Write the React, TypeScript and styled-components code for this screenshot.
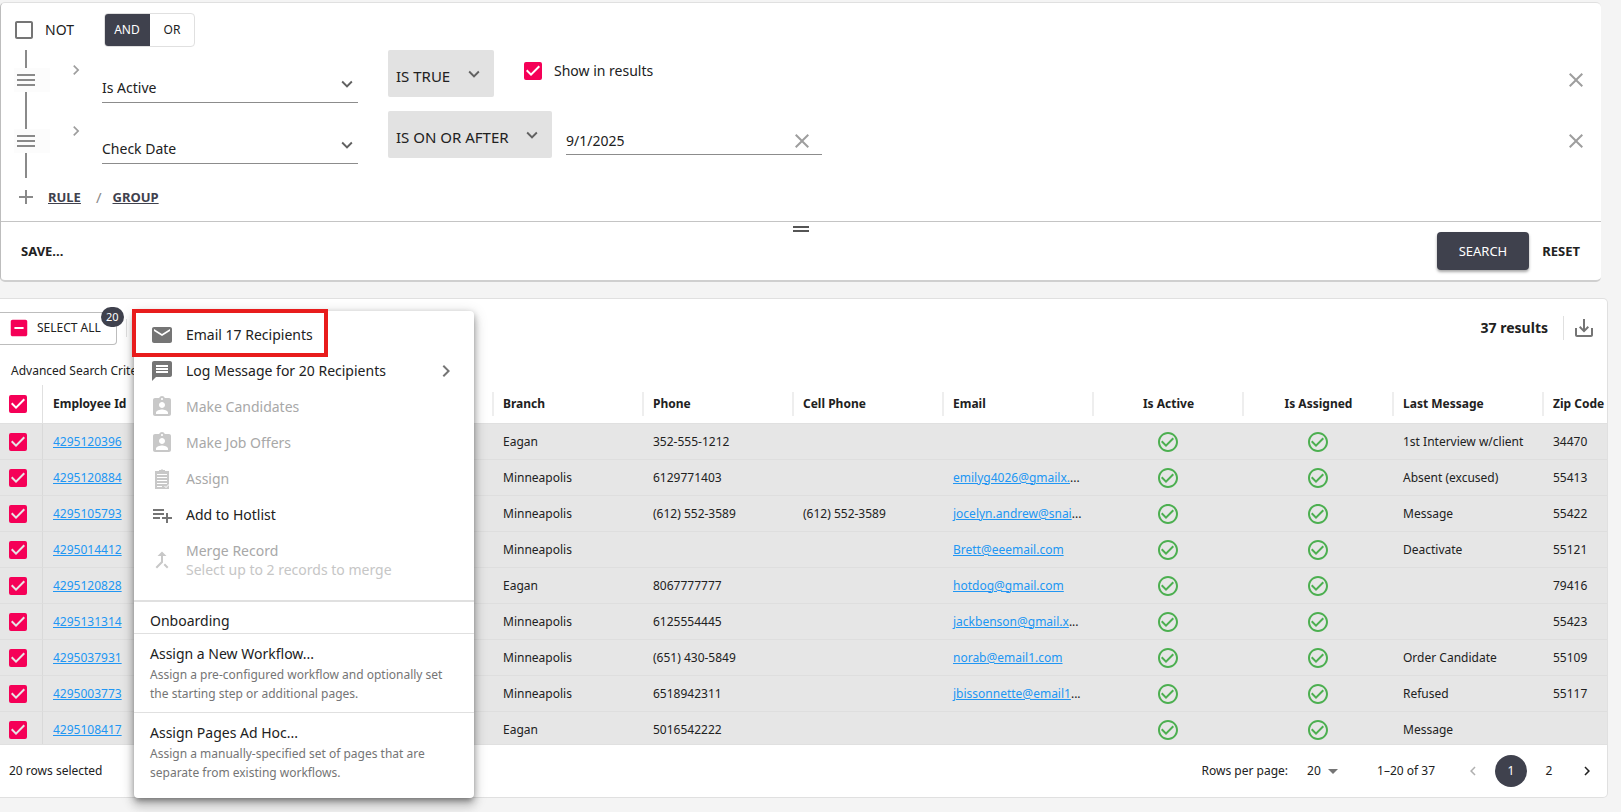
import React from "react";
import styled, { createGlobalStyle, css } from "styled-components";
import {
  MdAdd,
  MdArrowDropDown,
  MdAssignmentInd,
  MdCallMerge,
  MdCheckBox,
  MdCheckBoxOutlineBlank,
  MdCheckCircleOutline,
  MdChevronLeft,
  MdChevronRight,
  MdClose,
  MdDragHandle,
  MdEmail,
  MdExpandMore,
  MdIndeterminateCheckBox,
  MdMenu,
  MdMessage,
  MdPlaylistAdd,
  MdSaveAlt,
} from "react-icons/md";

const color = {
  text: "#212121",
  muted: "#757575",
  faint: "#9e9e9e",
  line: "#e0e0e0",
  dark: "#3f414d",
  accent: "#f50057",
  link: "#2196f3",
  page: "#f4f4f4",
};

const GlobalStyle = createGlobalStyle`
  * { box-sizing: border-box; }
  body {
    margin: 0;
    background: ${color.page};
    color: ${color.text};
    font: 14px/20px "Noto Sans", sans-serif;
  }
  button, input, select { font: inherit; color: inherit; }
  button { border: 0; padding: 0; background: none; cursor: pointer; }
  svg { display: block; flex: none; }
`;

const Page = styled.div`
  display: flex;
  flex-direction: column;
  height: 100vh;
  min-height: 700px;
  padding: 2px 13px 14px 0;
`;

/* ---------- tick boxes ---------- */

const TickLabel = styled.label<{ $gap: number }>`
  display: flex;
  align-items: center;
  gap: ${(p) => p.$gap}px;
  cursor: pointer;
`;

const TickFace = styled.span<{ $color: string }>`
  display: grid;
  color: ${(p) => p.$color};
  > * { grid-area: 1 / 1; }
`;

const TickInput = styled.input`
  appearance: none;
  margin: 0;
`;

type TickProps = {
  checked?: boolean;
  mixed?: boolean;
  size?: number;
  label?: string;
  name?: string;
  gap?: number;
};

function Tick({ checked, mixed, size = 24, label, name, gap = 9 }: TickProps) {
  const Icon = mixed ? MdIndeterminateCheckBox : checked ? MdCheckBox : MdCheckBoxOutlineBlank;
  return (
    <TickLabel $gap={gap}>
      <TickFace $color={checked || mixed ? color.accent : color.muted}>
        <TickInput type="checkbox" defaultChecked={checked} aria-label={label ? undefined : name} />
        <Icon size={size} />
      </TickFace>
      {label}
    </TickLabel>
  );
}

/* ---------- query builder ---------- */

const QueryPanel = styled.section`
  flex: none;
  margin-right: 7px;
  background: #fff;
  border: 1px solid ${color.line};
  border-left-color: #bdbdbd;
  border-right: 0;
  border-bottom: 2px solid #cfcfcf;
  border-radius: 5px;
`;

const Rules = styled.div`
  display: grid;
  padding: 10px 13px 12px 11px;
`;

const GroupHead = styled.div`
  display: flex;
  align-items: center;
  gap: 30px;
  height: 34px;
  margin-bottom: 3px;
`;

const Toggle = styled.div`
  display: flex;
  height: 34px;
  border: 1px solid ${color.line};
  border-radius: 4px;
  overflow: hidden;
`;

const ToggleButton = styled.button<{ $on?: boolean }>`
  width: 44px;
  font-size: 12px;
  ${(p) => p.$on && css`
    margin: -1px 0 -1px -1px;
    width: 46px;
    background: ${color.dark};
    color: #fff;
  `}
`;

const RuleRow = styled.div<{ $last?: boolean }>`
  display: flex;
  align-items: flex-start;
  height: ${(p) => (p.$last ? 67 : 61)}px;
`;

const Rail = styled.div`
  display: flex;
  flex-direction: column;
  width: 36px;
  height: 100%;
  margin-left: 2px;
  color: #8a8a8a;
`;

const RailLine = styled.span<{ $grow?: boolean }>`
  width: 2px;
  margin-left: 11px;
  background: #8a8a8a;
  ${(p) => (p.$grow ? "flex: 1;" : "height: 18px;")}
`;

const DragButton = styled.button`
  height: 24px;
  background: #fcfcfc;
  color: #8a8a8a;
`;

const ExpandButton = styled.button`
  margin: 10px 16px 0 16px;
  color: ${color.faint};
`;

const SelectWrap = styled.label`
  display: grid;
  align-items: center;
  > * { grid-area: 1 / 1; }
  > svg { justify-self: end; pointer-events: none; color: #616161; }
`;

const FieldWrap = styled(SelectWrap)`
  width: 256px;
  height: 53px;
  border-bottom: 1px solid #8c8c8c;
  > svg { margin-top: 15px; }
`;

const OperatorWrap = styled(SelectWrap)`
  height: 47px;
  margin-left: 30px;
  background: #e2e2e2;
  border-radius: 2px;
  > svg { margin-right: 9px; }
`;

const FieldSelect = styled.select`
  appearance: none;
  width: 100%;
  height: 100%;
  border: 0;
  padding: 24px 24px 0 0;
  background: none;
`;

const OperatorSelect = styled.select`
  appearance: none;
  height: 100%;
  border: 0;
  padding: 4px 43px 0 8px;
  background: none;
  font-size: 15px;
`;

const ResultsTick = styled.div`
  margin: 9px 0 0 27px;
`;

const DateField = styled.div`
  display: flex;
  align-items: center;
  width: 256px;
  height: 27px;
  margin: 17px 0 0 14px;
  border-bottom: 1px solid #8c8c8c;
`;

const DateInput = styled.input`
  flex: 1;
  min-width: 0;
  padding: 0;
  border: 0;
  background: none;
`;

const DateClear = styled.button`
  margin-right: 8px;
  color: ${color.faint};
`;

const RemoveButton = styled.button`
  margin: 18px 0 0 auto;
  color: ${color.faint};
`;

const AddRow = styled.div`
  display: flex;
  align-items: center;
  height: 24px;
  padding-left: 2px;
  margin-top: 7px;
  color: #8a8a8a;
`;

const AddButton = styled.button<{ $before: number }>`
  margin-left: ${(p) => p.$before}px;
  font-size: 13px;
  font-weight: 700;
  text-decoration: underline;
  color: ${color.dark};
`;

const Slash = styled.span`
  margin-left: 15px;
  font-size: 15px;
`;

const QueryFoot = styled.div`
  display: flex;
  height: 59px;
  padding: 0 21px 0 20px;
  border-top: 1px solid #c4c4c4;
  > svg { margin-top: -5px; color: #555; }
`;

const FootSide = styled.div<{ $end?: boolean }>`
  display: flex;
  flex: 1;
  align-items: center;
  gap: 13px;
  justify-content: ${(p) => (p.$end ? "flex-end" : "flex-start")};
`;

const TextButton = styled.button`
  font-size: 13px;
  font-weight: 700;
`;

const SearchButton = styled.button`
  height: 38px;
  padding: 0 22px;
  border-radius: 4px;
  background: ${color.dark};
  color: #fff;
  font-size: 13px;
  box-shadow: 0 2px 3px rgba(0, 0, 0, 0.35);
`;

function FieldChoice({ value }: { value: string }) {
  return (
    <FieldWrap>
      <FieldSelect aria-label="Field" defaultValue={value}>
        <option>{value}</option>
      </FieldSelect>
      <MdExpandMore size={22} />
    </FieldWrap>
  );
}

function OperatorChoice({ value }: { value: string }) {
  return (
    <OperatorWrap>
      <OperatorSelect aria-label="Operator" defaultValue={value}>
        <option>{value}</option>
      </OperatorSelect>
      <MdExpandMore size={22} />
    </OperatorWrap>
  );
}

type RuleProps = { field: string; operator: string; last?: boolean; children: React.ReactNode };

function Rule({ field, operator, last, children }: RuleProps) {
  return (
    <RuleRow $last={last}>
      <Rail>
        <RailLine />
        <DragButton aria-label="Move rule">
          <MdMenu size={24} />
        </DragButton>
        <RailLine $grow />
      </Rail>
      <ExpandButton aria-label="Expand rule">
        <MdChevronRight size={20} />
      </ExpandButton>
      <FieldChoice value={field} />
      <OperatorChoice value={operator} />
      {children}
      <RemoveButton aria-label="Remove rule">
        <MdClose size={24} />
      </RemoveButton>
    </RuleRow>
  );
}

function QueryBuilder() {
  return (
    <QueryPanel>
      <Rules>
        <GroupHead>
          <Tick label="NOT" />
          <Toggle>
            <ToggleButton $on>AND</ToggleButton>
            <ToggleButton>OR</ToggleButton>
          </Toggle>
        </GroupHead>
        <Rule field="Is Active" operator="IS TRUE">
          <ResultsTick>
            <Tick checked label="Show in results" />
          </ResultsTick>
        </Rule>
        <Rule field="Check Date" operator="IS ON OR AFTER" last>
          <DateField>
            <DateInput aria-label="Check date" defaultValue="9/1/2025" />
            <DateClear aria-label="Clear date">
              <MdClose size={24} />
            </DateClear>
          </DateField>
        </Rule>
        <AddRow>
          <MdAdd size={24} />
          <AddButton $before={10}>RULE</AddButton>
          <Slash>/</Slash>
          <AddButton $before={11}>GROUP</AddButton>
        </AddRow>
      </Rules>
      <QueryFoot>
        <FootSide>
          <TextButton>SAVE...</TextButton>
        </FootSide>
        <MdDragHandle size={24} />
        <FootSide $end>
          <SearchButton>SEARCH</SearchButton>
          <TextButton>RESET</TextButton>
        </FootSide>
      </QueryFoot>
    </QueryPanel>
  );
}

/* ---------- results ---------- */

const ResultsPanel = styled.section`
  position: relative;
  display: flex;
  flex: 1;
  flex-direction: column;
  min-height: 0;
  margin-top: 16px;
  background: #fff;
  border: 1px solid ${color.line};
  border-left: 0;
  border-radius: 0 5px 5px 0;
`;

const Toolbar = styled.div`
  display: flex;
  align-items: center;
  height: 58px;
  padding-right: 11px;
`;

const SelectAll = styled.div`
  position: relative;
  display: flex;
  align-items: center;
  height: 33px;
  padding: 0 15px 0 8px;
  border: 1px solid #bdbdbd;
  border-left: 0;
  border-radius: 0 4px 4px 0;
  font-size: 12px;
`;

const Badge = styled.span`
  position: absolute;
  top: -6px;
  right: -8px;
  min-width: 23px;
  border-radius: 10px;
  background: ${color.dark};
  color: #fff;
  font-size: 11px;
  text-align: center;
`;

const Separator = styled.span<{ $height: number; $left: number }>`
  width: 1px;
  height: ${(p) => p.$height}px;
  margin-left: ${(p) => p.$left}px;
  background: ${color.line};
`;

const Total = styled.strong`
  margin-left: auto;
`;

const DownloadButton = styled.button`
  margin-left: 8px;
  color: ${color.muted};
`;

const Criteria = styled.p`
  margin: 0;
  padding: 4px 11px;
  font-size: 12px;
`;

const TableArea = styled.div`
  flex: 1;
  min-height: 0;
  overflow: hidden;
`;

const Table = styled.table`
  width: 1693px;
  border-spacing: 0;
  table-layout: fixed;
  font-size: 12px;
`;

const HeadCell = styled.th<{ $center?: boolean }>`
  height: 39px;
  padding: 0;
  border-bottom: 1px solid ${color.line};
  text-align: ${(p) => (p.$center ? "center" : "left")};
`;

const HeadText = styled.div<{ $bar?: boolean }>`
  height: 24px;
  margin-left: -1px;
  padding: 0 9px;
  line-height: 24px;
  border-left: 2px solid ${(p) => (p.$bar ? "#eee" : "transparent")};
`;

const Cell = styled.td`
  height: 36px;
  padding: 0 10px;
  background: #e6e6e6;
  border-bottom: 1px solid #dedede;
  white-space: nowrap;
  overflow: hidden;
  text-overflow: ellipsis;
`;

const TickHead = styled(HeadCell)`
  border-right: 1px solid ${color.line};
  padding: 0 6px;
`;

const TickCell = styled(Cell)`
  border-right: 1px solid #d9d9d9;
  padding: 0 6px;
`;

const YesIcon = styled(MdCheckCircleOutline)`
  margin: 0 auto;
  color: #4caf50;
`;

const Link = styled.a`
  color: ${color.link};
  text-decoration: underline;
`;

const Foot = styled.div`
  display: flex;
  flex: none;
  align-items: center;
  height: 53px;
  padding: 0 4px 0 9px;
  border-top: 1px solid ${color.line};
  font-size: 12px;
`;

const PerPage = styled.label`
  display: flex;
  align-items: center;
  margin-left: auto;
  gap: 19px;
`;

const PerPageWrap = styled.span`
  display: grid;
  align-items: center;
  > * { grid-area: 1 / 1; }
  > svg { justify-self: end; pointer-events: none; color: ${color.muted}; }
`;

const PerPageSelect = styled.select`
  appearance: none;
  border: 0;
  padding: 0 24px 0 0;
  background: none;
`;

const Range = styled.span`
  margin: 0 22px 0 32px;
`;

const PageButton = styled.button<{ $on?: boolean; $dim?: boolean }>`
  display: grid;
  place-items: center;
  width: 32px;
  height: 32px;
  border-radius: 16px;
  ${(p) => p.$on && css`
    background: ${color.dark};
    color: #fff;
  `}
  ${(p) => p.$dim && css`
    color: #b0b0b0;
  `}
`;

const PageList = styled.nav`
  display: flex;
  align-items: center;
  gap: 6px;
`;

type Person = {
  id: string;
  branch: string;
  phone?: string;
  cell?: string;
  email?: string;
  message?: string;
  zip?: string;
};

const people: Person[] = [
  { id: "4295120396", branch: "Eagan", phone: "352-555-1212", message: "1st Interview w/client", zip: "34470" },
  { id: "4295120884", branch: "Minneapolis", phone: "6129771403", email: "emilyg4026@gmailx....", message: "Absent (excused)", zip: "55413" },
  { id: "4295105793", branch: "Minneapolis", phone: "(612) 552-3589", cell: "(612) 552-3589", email: "jocelyn.andrew@snai...", message: "Message", zip: "55422" },
  { id: "4295014412", branch: "Minneapolis", email: "Brett@eeemail.com", message: "Deactivate", zip: "55121" },
  { id: "4295120828", branch: "Eagan", phone: "8067777777", email: "hotdog@gmail.com", zip: "79416" },
  { id: "4295131314", branch: "Minneapolis", phone: "6125554445", email: "jackbenson@gmail.x...", zip: "55423" },
  { id: "4295037931", branch: "Minneapolis", phone: "(651) 430-5849", email: "norab@email1.com", message: "Order Candidate", zip: "55109" },
  { id: "4295003773", branch: "Minneapolis", phone: "6518942311", email: "jbissonnette@email1...", message: "Refused", zip: "55117" },
  { id: "4295108417", branch: "Eagan", phone: "5016542222", message: "Message" },
];

const columns: { title: string; center?: boolean }[] = [
  { title: "Employee Id" },
  { title: "" },
  { title: "" },
  { title: "Branch" },
  { title: "Phone" },
  { title: "Cell Phone" },
  { title: "Email" },
  { title: "Is Active", center: true },
  { title: "Is Assigned", center: true },
  { title: "Last Message" },
  { title: "Zip Code" },
];

function EmailLink({ email }: { email: string }) {
  const cut = email.endsWith("...");
  const shown = cut ? email.slice(0, -3) : email;
  return (
    <>
      <Link href="#">{shown}</Link>
      {cut && "..."}
    </>
  );
}

function ResultsTable() {
  return (
    <Table>
      <colgroup>
        <col width={43} />
        {columns.map((_, i) => (
          <col key={i} width={150} />
        ))}
      </colgroup>
      <thead>
        <tr>
          <TickHead>
            <Tick checked name="Select all rows" />
          </TickHead>
          {columns.map((c, i) => (
            <HeadCell key={i} $center={c.center}>
              <HeadText $bar={i > 0}>{c.title}</HeadText>
            </HeadCell>
          ))}
        </tr>
      </thead>
      <tbody>
        {people.map((p) => (
          <tr key={p.id}>
            <TickCell>
              <Tick checked name={`Select ${p.id}`} />
            </TickCell>
            <Cell>
              <Link href="#">{p.id}</Link>
            </Cell>
            <Cell />
            <Cell />
            <Cell>{p.branch}</Cell>
            <Cell>{p.phone}</Cell>
            <Cell>{p.cell}</Cell>
            <Cell>{p.email && <EmailLink email={p.email} />}</Cell>
            <Cell>
              <YesIcon size={24} />
            </Cell>
            <Cell>
              <YesIcon size={24} />
            </Cell>
            <Cell>{p.message}</Cell>
            <Cell>{p.zip}</Cell>
          </tr>
        ))}
      </tbody>
    </Table>
  );
}

/* ---------- actions menu ---------- */

const Menu = styled.div`
  position: absolute;
  top: 12px;
  left: 134px;
  width: 340px;
  padding-top: 6px;
  background: #fff;
  border-radius: 4px;
  box-shadow: 0 5px 5px -3px rgba(0, 0, 0, 0.2), 0 8px 10px 1px rgba(0, 0, 0, 0.14),
    0 3px 14px 2px rgba(0, 0, 0, 0.12), 0 2px 6px rgba(0, 0, 0, 0.25);
`;

const MenuItem = styled.button`
  display: flex;
  align-items: center;
  gap: 12px;
  width: 100%;
  padding: 8px 16px;
  text-align: left;
  > svg { margin: -2px 0; color: ${color.muted}; }
  > svg:last-child { margin-left: auto; }
  &:disabled { color: #a8a8a8; cursor: default; }
  &:disabled > svg { color: #c8c8c8; }
`;

const MenuText = styled.span`
  display: block;
`;

const MenuHint = styled.small`
  display: block;
  font-size: 14px;
  line-height: 18px;
  color: #c6c6c6;
`;

const MenuGroup = styled.div`
  margin-top: 13px;
  padding: 9px 16px 2px;
  border-top: 2px solid ${color.line};
  border-bottom: 1px solid ${color.line};
`;

const WorkflowItem = styled.button`
  display: block;
  width: 100%;
  padding: 9px 16px;
  text-align: left;
  line-height: 22px;
  & + & { padding-bottom: 16px; border-top: 1px solid ${color.line}; }
`;

const WorkflowHint = styled.small`
  display: block;
  font-size: 12px;
  line-height: 19px;
  color: ${color.muted};
`;

const Highlight = styled.div`
  position: absolute;
  top: -2px;
  left: -2px;
  width: 196px;
  height: 48px;
  border: 4px solid #e81c1c;
  pointer-events: none;
`;

const AssignIcon = () => (
  <svg width="24" height="24" viewBox="0 0 24 24" fill="currentColor">
    <path
      fillRule="evenodd"
      d="M5 4h4V3h2l1-1 1 1h2v1h4v18H5zM7 7v1h10V7zM7 10v1h10v-1zM7 13v1h10v-1zM7 16v1h10v-1zM7 19v1h5v-1zM14 19l2 2 3-3v-1l-3 3-1-1z"
    />
  </svg>
);

function ActionsMenu() {
  return (
    <Menu>
      <MenuItem>
        <MdEmail size={24} />
        <MenuText>Email 17 Recipients</MenuText>
      </MenuItem>
      <MenuItem>
        <MdMessage size={24} />
        <MenuText>Log Message for 20 Recipients</MenuText>
        <MdChevronRight size={24} />
      </MenuItem>
      <MenuItem disabled>
        <MdAssignmentInd size={24} />
        <MenuText>Make Candidates</MenuText>
      </MenuItem>
      <MenuItem disabled>
        <MdAssignmentInd size={24} />
        <MenuText>Make Job Offers</MenuText>
      </MenuItem>
      <MenuItem disabled>
        <AssignIcon />
        <MenuText>Assign</MenuText>
      </MenuItem>
      <MenuItem>
        <MdPlaylistAdd size={24} />
        <MenuText>Add to Hotlist</MenuText>
      </MenuItem>
      <MenuItem disabled>
        <MdCallMerge size={24} />
        <MenuText>
          Merge Record
          <MenuHint>Select up to 2 records to merge</MenuHint>
        </MenuText>
      </MenuItem>
      <MenuGroup>Onboarding</MenuGroup>
      <WorkflowItem>
        Assign a New Workflow...
        <WorkflowHint>Assign a pre-configured workflow and optionally set the starting step or additional pages.</WorkflowHint>
      </WorkflowItem>
      <WorkflowItem>
        Assign Pages Ad Hoc...
        <WorkflowHint>Assign a manually-specified set of pages that are separate from existing workflows.</WorkflowHint>
      </WorkflowItem>
      <Highlight />
    </Menu>
  );
}

export default function App() {
  return (
    <>
      <GlobalStyle />
      <Page>
        <QueryBuilder />
        <ResultsPanel>
          <Toolbar>
            <SelectAll>
              <Tick mixed size={22} gap={7} label="SELECT ALL" />
              <Badge>20</Badge>
            </SelectAll>
            <Separator $height={18} $left={9} />
            <Total>37 results</Total>
            <Separator $height={24} $left={15} />
            <DownloadButton aria-label="Download">
              <MdSaveAlt size={24} />
            </DownloadButton>
          </Toolbar>
          <Criteria>Advanced Search Criteria</Criteria>
          <TableArea>
            <ResultsTable />
          </TableArea>
          <Foot>
            <span>20 rows selected</span>
            <PerPage>
              Rows per page:
              <PerPageWrap>
                <PerPageSelect defaultValue="20">
                  <option>20</option>
                </PerPageSelect>
                <MdArrowDropDown size={24} />
              </PerPageWrap>
            </PerPage>
            <Range>1–20 of 37</Range>
            <PageList aria-label="Pages">
              <PageButton $dim aria-label="Previous page">
                <MdChevronLeft size={18} />
              </PageButton>
              <PageButton $on>1</PageButton>
              <PageButton>2</PageButton>
              <PageButton aria-label="Next page">
                <MdChevronRight size={18} />
              </PageButton>
            </PageList>
          </Foot>
          <ActionsMenu />
        </ResultsPanel>
      </Page>
    </>
  );
}
